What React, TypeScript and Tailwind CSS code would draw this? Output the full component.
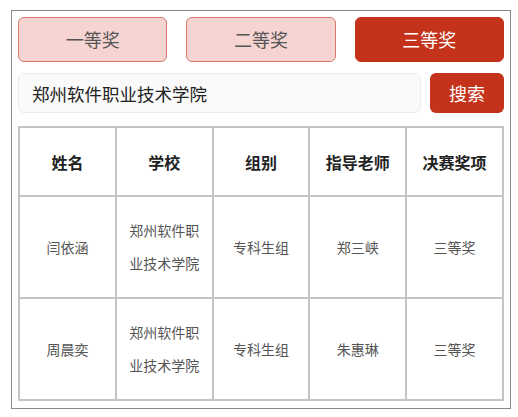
import { useState } from "react";

const tabs = ["一等奖", "二等奖", "三等奖"];

const rows = [
  { name: "闫依涵", school: "郑州软件职业技术学院", group: "专科生组", teacher: "郑三峡", award: "三等奖" },
  { name: "周晨奕", school: "郑州软件职业技术学院", group: "专科生组", teacher: "朱惠琳", award: "三等奖" },
];

const headers = ["姓名", "学校", "组别", "指导老师", "决赛奖项"];

export default function App() {
  const [active, setActive] = useState(2);
  const [query, setQuery] = useState("郑州软件职业技术学院");

  return (
    <div
      className="min-h-[417px] bg-white pl-[11px] pt-[10px]"
      style={{ fontFamily: '"Noto Sans CJK SC", sans-serif' }}
    >
      <div className="w-[500px] border border-[#8a8a8a] px-[6px] pb-[7px] pt-[6px]">
        <div className="flex gap-[19px]">
          {tabs.map((t, i) => (
            <button
              key={t}
              type="button"
              onClick={() => setActive(i)}
              className={
                i === active
                  ? "h-[45px] w-[150px] rounded-[6px] border border-[#c5321b] bg-[#c5321b] text-[18px] text-white"
                  : "h-[45px] w-[150px] rounded-[6px] border border-[#d8776c] bg-[#f6d4d2] text-[18px] text-[#555]"
              }
            >
              {t}
            </button>
          ))}
        </div>

        <div className="mt-[11px] flex gap-[9px]">
          <input
            value={query}
            onChange={(e) => setQuery(e.target.value)}
            className="h-[40px] w-[403px] rounded-[6px] border border-[#ececec] bg-[#fafafa] px-[13px] text-[17.5px] text-[#222] outline-none"
          />
          <button
            type="button"
            className="h-[40px] w-[74px] rounded-[6px] bg-[#c5321b] text-[18px] text-white"
          >
            搜索
          </button>
        </div>

        <table className="mt-[13px] w-[486px] table-fixed border-collapse border-2 border-[#c4c4c4] text-center">
          <thead>
            <tr className="h-[69px]">
              {headers.map((h) => (
                <th key={h} className="border-2 border-[#c4c4c4] text-[16px] font-bold text-[#222]">
                  {h}
                </th>
              ))}
            </tr>
          </thead>
          <tbody>
            {rows.map((r) => (
              <tr key={r.name} className="h-[102px] text-[14px] text-[#555]">
                <td className="border-2 border-[#c4c4c4]">{r.name}</td>
                <td className="border-2 border-[#c4c4c4] px-[8px] leading-[33px]">{r.school}</td>
                <td className="border-2 border-[#c4c4c4]">{r.group}</td>
                <td className="border-2 border-[#c4c4c4]">{r.teacher}</td>
                <td className="border-2 border-[#c4c4c4]">{r.award}</td>
              </tr>
            ))}
          </tbody>
        </table>
      </div>
    </div>
  );
}
